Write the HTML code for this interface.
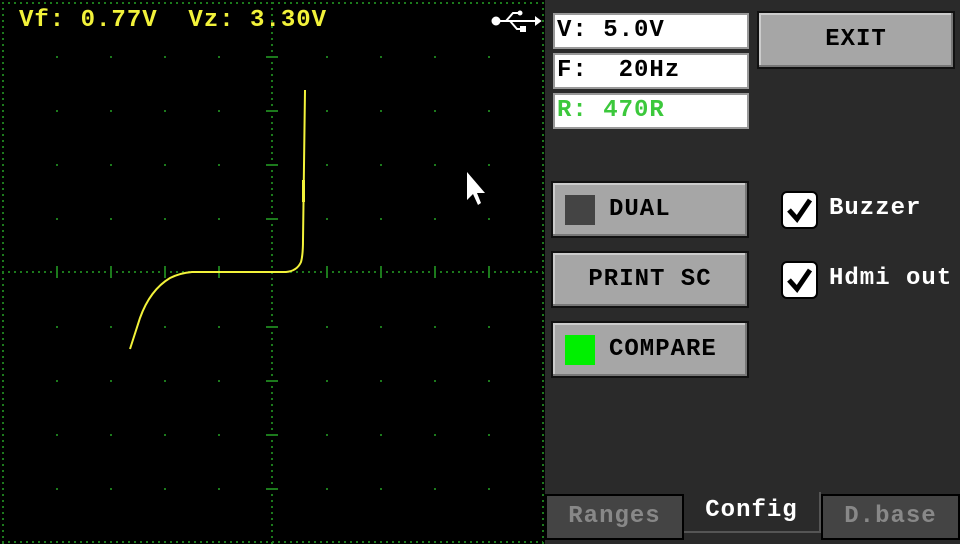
<!DOCTYPE html>
<html><head><style>
body{margin:0;width:960px;height:544px;background:#2a2a2a;position:relative;overflow:hidden;font-family:"Liberation Mono",monospace;font-weight:bold}
.a{position:absolute}
.box{position:absolute;background:#fff;border:2px solid #999;box-sizing:border-box;font-size:24px;letter-spacing:1px;line-height:32px;padding-left:2px;color:#000}
.btn{position:absolute;background:#a6a6a6;border:2px solid #111;box-shadow:inset -2px -2px 0 #777,inset 2px 2px 0 #ccc;box-sizing:border-box;font-size:24px;letter-spacing:1px;color:#000}
.cb{position:absolute;width:37px;height:38px;background:#fff;border:2px solid #000;border-radius:6px;box-sizing:border-box}
.tab{position:absolute;box-sizing:border-box;font-size:24px;letter-spacing:1px;text-align:center}
</style></head><body>
<div class="a" style="left:0;top:0;width:545px;height:544px;background:#000"></div>
<svg class="a" style="left:0;top:0" width="546" height="544">
<g stroke="#1c7a1c" stroke-width="2" stroke-dasharray="2 4" fill="none">
<line x1="3" y1="2" x2="3" y2="544"/><line x1="543" y1="2" x2="543" y2="544"/>
<line x1="2" y1="3" x2="543" y2="3"/><line x1="2" y1="542" x2="543" y2="542"/>
<line x1="272" y1="2" x2="272" y2="544"/><line x1="2" y1="272" x2="543" y2="272"/>
</g>
<g stroke="#1c7a1c" stroke-width="2">
<line x1="57" y1="266" x2="57" y2="278"/><line x1="111" y1="266" x2="111" y2="278"/><line x1="165" y1="266" x2="165" y2="278"/><line x1="219" y1="266" x2="219" y2="278"/><line x1="327" y1="266" x2="327" y2="278"/><line x1="381" y1="266" x2="381" y2="278"/><line x1="435" y1="266" x2="435" y2="278"/><line x1="489" y1="266" x2="489" y2="278"/>
<line x1="266" y1="57" x2="278" y2="57"/><line x1="266" y1="111" x2="278" y2="111"/><line x1="266" y1="165" x2="278" y2="165"/><line x1="266" y1="219" x2="278" y2="219"/><line x1="266" y1="327" x2="278" y2="327"/><line x1="266" y1="381" x2="278" y2="381"/><line x1="266" y1="435" x2="278" y2="435"/><line x1="266" y1="489" x2="278" y2="489"/>
</g>
<g fill="#1c7a1c">
<rect x="56" y="56" width="2" height="2"/><rect x="110" y="56" width="2" height="2"/><rect x="164" y="56" width="2" height="2"/><rect x="218" y="56" width="2" height="2"/><rect x="326" y="56" width="2" height="2"/><rect x="380" y="56" width="2" height="2"/><rect x="434" y="56" width="2" height="2"/><rect x="488" y="56" width="2" height="2"/>
<rect x="56" y="110" width="2" height="2"/><rect x="110" y="110" width="2" height="2"/><rect x="164" y="110" width="2" height="2"/><rect x="218" y="110" width="2" height="2"/><rect x="326" y="110" width="2" height="2"/><rect x="380" y="110" width="2" height="2"/><rect x="434" y="110" width="2" height="2"/><rect x="488" y="110" width="2" height="2"/>
<rect x="56" y="164" width="2" height="2"/><rect x="110" y="164" width="2" height="2"/><rect x="164" y="164" width="2" height="2"/><rect x="218" y="164" width="2" height="2"/><rect x="326" y="164" width="2" height="2"/><rect x="380" y="164" width="2" height="2"/><rect x="434" y="164" width="2" height="2"/><rect x="488" y="164" width="2" height="2"/>
<rect x="56" y="218" width="2" height="2"/><rect x="110" y="218" width="2" height="2"/><rect x="164" y="218" width="2" height="2"/><rect x="218" y="218" width="2" height="2"/><rect x="326" y="218" width="2" height="2"/><rect x="380" y="218" width="2" height="2"/><rect x="434" y="218" width="2" height="2"/><rect x="488" y="218" width="2" height="2"/>
<rect x="56" y="326" width="2" height="2"/><rect x="110" y="326" width="2" height="2"/><rect x="164" y="326" width="2" height="2"/><rect x="218" y="326" width="2" height="2"/><rect x="326" y="326" width="2" height="2"/><rect x="380" y="326" width="2" height="2"/><rect x="434" y="326" width="2" height="2"/><rect x="488" y="326" width="2" height="2"/>
<rect x="56" y="380" width="2" height="2"/><rect x="110" y="380" width="2" height="2"/><rect x="164" y="380" width="2" height="2"/><rect x="218" y="380" width="2" height="2"/><rect x="326" y="380" width="2" height="2"/><rect x="380" y="380" width="2" height="2"/><rect x="434" y="380" width="2" height="2"/><rect x="488" y="380" width="2" height="2"/>
<rect x="56" y="434" width="2" height="2"/><rect x="110" y="434" width="2" height="2"/><rect x="164" y="434" width="2" height="2"/><rect x="218" y="434" width="2" height="2"/><rect x="326" y="434" width="2" height="2"/><rect x="380" y="434" width="2" height="2"/><rect x="434" y="434" width="2" height="2"/><rect x="488" y="434" width="2" height="2"/>
<rect x="56" y="488" width="2" height="2"/><rect x="110" y="488" width="2" height="2"/><rect x="164" y="488" width="2" height="2"/><rect x="218" y="488" width="2" height="2"/><rect x="326" y="488" width="2" height="2"/><rect x="380" y="488" width="2" height="2"/><rect x="434" y="488" width="2" height="2"/><rect x="488" y="488" width="2" height="2"/>
</g>
<path d="M130 349 L140 318 Q150 290 170 278 Q180 273 192 272 L286 272 Q297 271 301 262 Q303 255 303 240 L305 90" stroke="#f2f23a" stroke-width="2" fill="none"/>
<rect x="302" y="180" width="3" height="22" fill="#f2f23a"/>
<path d="M467 172 L467 200 L473 194 L478 205 L481 203 L477 193 L485 193 Z" fill="#fff"/>
<g stroke="#fff" stroke-width="2" fill="#fff">
<circle cx="496" cy="21" r="3.5"/>
<line x1="496" y1="21" x2="537" y2="21"/>
<path d="M506 21 L513 13 L520 13" fill="none"/><path d="M510 21 L517 29 L524 29" fill="none"/>
<rect x="521" y="27" width="4" height="4"/>
<path d="M536 18 L540 21 L536 24 Z"/>
<circle cx="520" cy="13" r="1.5"/>
</g>
</svg>
<div class="a" style="left:19px;top:7px;color:#f2f23a;font-size:24px;letter-spacing:1px;white-space:pre">Vf: 0.77V  Vz: 3.30V</div>

<div class="box" style="left:553px;top:13px;width:196px;height:36px">V: 5.0V</div>
<div class="box" style="left:553px;top:53px;width:196px;height:36px;white-space:pre">F:  20Hz</div>
<div class="box" style="left:553px;top:93px;width:196px;height:36px;color:#3cc83c">R: 470R</div>

<div class="btn" style="left:757px;top:11px;width:198px;height:58px;text-align:center;line-height:54px">EXIT</div>
<div class="btn" style="left:551px;top:181px;width:198px;height:57px;line-height:53px"><span class="a" style="left:12px;top:12px;width:30px;height:30px;background:#444"></span><span style="margin-left:56px">DUAL</span></div>
<div class="btn" style="left:551px;top:251px;width:198px;height:57px;line-height:53px;text-align:center">PRINT SC</div>
<div class="btn" style="left:551px;top:321px;width:198px;height:57px;line-height:53px"><span class="a" style="left:12px;top:12px;width:30px;height:30px;background:#00f000"></span><span style="margin-left:56px">COMPARE</span></div>

<div class="cb" style="left:781px;top:191px"><svg width="33" height="34"><path d="M6 17 L14 26 L27 7" stroke="#000" stroke-width="5" fill="none"/></svg></div>
<div class="cb" style="left:781px;top:261px"><svg width="33" height="34"><path d="M6 17 L14 26 L27 7" stroke="#000" stroke-width="5" fill="none"/></svg></div>
<div class="a" style="left:829px;top:195px;color:#fff;font-size:24px;letter-spacing:1px">Buzzer</div>
<div class="a" style="left:829px;top:265px;color:#fff;font-size:24px;letter-spacing:1px;white-space:pre">Hdmi out</div>

<div class="tab" style="left:545px;top:494px;width:139px;height:46px;background:#444;border:2px solid #000;color:#888;line-height:42px">Ranges</div>
<div class="tab" style="left:684px;top:492px;width:137px;height:41px;background:#2a2a2a;border-right:2px solid #555;border-bottom:2px solid #555;color:#fff;line-height:38px">Config</div>
<div class="tab" style="left:821px;top:494px;width:139px;height:46px;background:#444;border:2px solid #000;color:#888;line-height:42px">D.base</div>
</body></html>
